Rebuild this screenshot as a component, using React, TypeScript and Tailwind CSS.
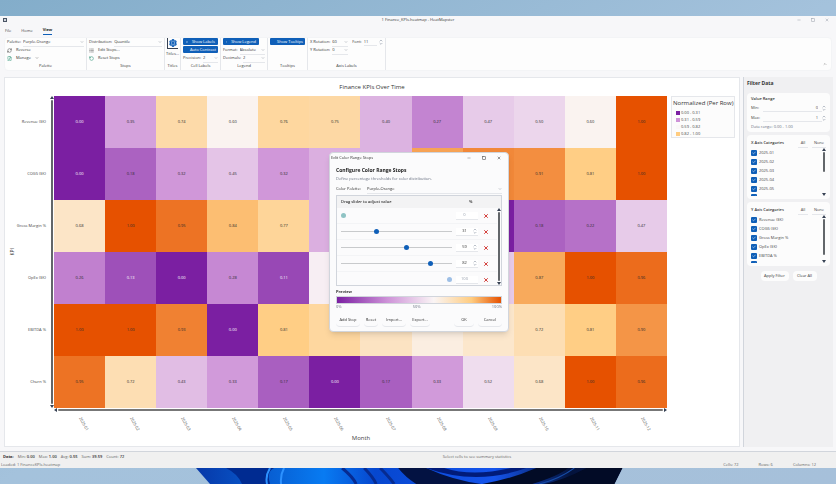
import { useState } from 'react';
import type { ReactNode } from 'react';
import {
  Captions,
  Check,
  ChevronDown,
  Contrast,
  FilePen,
  Hash,
  List,
  MessageSquare,
  Minus,
  RefreshCw,
  RotateCcw,
  Settings,
  Square,
  X,
} from 'lucide-react';
import clsx from 'clsx';

const months = Array.from({ length: 12 }, (_, i) => `2025-${String(i + 1).padStart(2, '0')}`);

const rows = [
  { name: 'Revenue ($K)', values: [0, 0.35, 0.74, 0.6, 0.76, 0.75, 0.4, 0.27, 0.47, 0.5, 0.6, 1] },
  { name: 'COGS ($K)', values: [0, 0.18, 0.32, 0.45, 0.32, 0.39, 0.4, 0.88, 0.92, 0.91, 0.81, 1] },
  { name: 'Gross Margin %', values: [0.68, 1, 0.95, 0.84, 0.77, 0.39, 0.35, 0.2, 0, 0.18, 0.22, 0.47] },
  { name: 'OpEx ($K)', values: [0.26, 0.13, 0, 0.28, 0.11, 0.57, 0.55, 0.5, 0.47, 0.87, 1, 0.96] },
  { name: 'EBITDA %', values: [1, 1, 0.93, 0, 0.81, 0.76, 0.69, 0.63, 0.67, 0.72, 0.81, 0.9] },
  { name: 'Churn %', values: [0.95, 0.72, 0.43, 0.33, 0.17, 0, 0.17, 0.33, 0.52, 0.68, 1, 0.96] },
];

const scale: [number, number[]][] = [
  [0, [123, 31, 162]],
  [0.31, [206, 147, 216]],
  [0.59, [250, 245, 245]],
  [0.82, [255, 204, 128]],
  [1, [230, 81, 0]],
];

function cellColor(v: number) {
  const i = Math.max(1, scale.findIndex(([stop]) => v <= stop));
  const [a, from] = scale[i - 1];
  const [b, to] = scale[i];
  const t = (v - a) / (b - a);
  return `rgb(${from.map((c, k) => Math.round(c + (to[k] - c) * t)).join(',')})`;
}

function Select({ label, value, className }: { label: string; value: string; className?: string }) {
  return (
    <label className="flex h-2 items-center gap-[2px]">
      <span className="shrink-0">{label}</span>
      <span className={clsx('flex items-center border-b border-gray-200', className)}>
        <select defaultValue={value} className="h-2 min-w-0 flex-1 appearance-none bg-transparent p-0 outline-none">
          <option>{value}</option>
        </select>
        <ChevronDown size={4} className="shrink-0 text-gray-500" />
      </span>
    </label>
  );
}

function Spinner() {
  return (
    <svg viewBox="0 0 6 8" className="h-[6px] w-1 shrink-0 stroke-gray-400" fill="none">
      <path d="M1 3 3 1l2 2M1 5.500l2 2 2-2" />
    </svg>
  );
}

function Group({ title, children, className }: { title: string; children: ReactNode; className?: string }) {
  return (
    <section className={clsx('flex shrink-0 flex-col border-r border-gray-200 px-[2px]', className)}>
      <div className="flex flex-1 flex-col">{children}</div>
      <h2 className="h-2 text-center">{title}</h2>
    </section>
  );
}

function Toggle({ icon, children }: { icon: ReactNode; children: ReactNode }) {
  return (
    <button className="mb-px flex h-[7px] w-full items-center gap-1 rounded-[1px] bg-[#0f5fb8] px-[3px] leading-[7px] text-white">
      {icon}
      <span className="flex-1 whitespace-nowrap">{children}</span>
    </button>
  );
}

function Ribbon() {
  return (
    <div className="mx-1 flex h-[34px] shrink-0 rounded-sm border border-gray-100 bg-[#fdfdfd] text-[4px] text-[#333] leading-2">
      <Group title="Palette" className="w-[82px]">
        <Select label="Palette:" value="Purple-Orange" className="flex-1" />
        <button className="flex h-2 items-center gap-1 text-left">
          <RefreshCw size={5} /> Reverse
        </button>
        <button className="flex h-2 items-center gap-1 text-left">
          <FilePen size={5} className="text-emerald-700" /> Manage <ChevronDown size={4} />
        </button>
      </Group>
      <Group title="Stops" className="w-[78px]">
        <Select label="Distribution:" value="Quantile" className="flex-1" />
        <button className="flex h-2 items-center gap-1 text-left">
          <List size={5} /> Edit Stops...
        </button>
        <button className="flex h-2 items-center gap-1 text-left">
          <RotateCcw size={5} className="text-emerald-700" /> Reset Stops
        </button>
      </Group>
      <Group title="Titles" className="w-4">
        <button className="flex flex-col items-center">
          <span className="mb-px border-b border-l border-gray-700 p-px">
            <Settings size={8} strokeWidth={4} className="text-[#0f5fb8]" />
          </span>
          Titles...
        </button>
      </Group>
      <Group title="Cell Labels" className="w-10">
        <Toggle icon={<Hash size={4} />}>Show Labels</Toggle>
        <Toggle icon={<Contrast size={4} />}>Auto Contrast</Toggle>
        <Select label="Precision:" value="2" className="flex-1" />
      </Group>
      <Group title="Legend" className="w-[47px]">
        <div className="w-9">
          <Toggle icon={<Captions size={4} />}>Show Legend</Toggle>
        </div>
        <Select label="Format:" value="Absolute" className="flex-1" />
        <Select label="Decimals:" value="2" className="flex-1" />
      </Group>
      <Group title="Tooltips" className="w-10">
        <Toggle icon={<MessageSquare size={4} />}>Show Tooltips</Toggle>
      </Group>
      <Group title="Axis Labels" className="w-[78px]">
        <div className="flex gap-1">
          <Select label="X Rotation:" value="60" className="w-4" />
          <label className="flex h-2 flex-1 items-center gap-[2px]">
            Font:
            <input defaultValue="11" className="h-2 w-full min-w-0 border-b border-gray-200 bg-transparent" />
            <Spinner />
          </label>
        </div>
        <Select label="Y Rotation:" value="0" className="w-4" />
      </Group>
      <button aria-label="Collapse ribbon" className="mt-auto ml-auto p-1">
        <ChevronDown size={4} className="rotate-180" />
      </button>
    </div>
  );
}

function VerticalScrollbar({ className, thumb = 'flex-1' }: { className?: string; thumb?: string }) {
  return (
    <div className={clsx('flex w-1 shrink-0 flex-col items-center text-gray-700', className)}>
      <svg viewBox="0 0 4 3" className="h-[3px] w-1 shrink-0 fill-current">
        <path d="M2 0 4 3H0z" />
      </svg>
      <div className={clsx('my-px w-[2px] rounded-full bg-[#62666a]', thumb)} />
      <svg viewBox="0 0 4 3" className="mt-auto h-[3px] w-1 shrink-0 fill-current">
        <path d="M0 0h4L2 3z" />
      </svg>
    </div>
  );
}

function Heatmap() {
  return (
    <main className="flex min-w-0 flex-1 flex-col border border-gray-200 bg-white text-[#444]">
      <h1 className="h-[18px] text-center text-[6px] leading-[18px] text-[#333]">Finance KPIs Over Time</h1>
      <div className="flex min-h-0 flex-1">
        <div className="flex w-4 shrink-0 items-center justify-center">
          <span className="-rotate-90 text-[5px]">KPI</span>
        </div>
        <div className="grid w-[25px] shrink-0 grid-cols-1 grid-rows-6 items-center text-[4px] whitespace-nowrap">
          {rows.map((row) => (
            <span key={row.name} className="flex justify-end">{row.name}</span>
          ))}
        </div>
        <VerticalScrollbar className="ml-1" />
        <div className="grid min-w-0 flex-1 grid-cols-12 grid-rows-6 text-[4px]">
          {rows.map((row) =>
            row.values.map((v, i) => (
              <div
                key={row.name + i}
                className={clsx('flex items-center justify-center', v < 0.15 ? 'text-white' : 'text-[#2b2b2b]')}
                style={{ backgroundColor: cellColor(v) }}
              >
                {v.toFixed(2)}
              </div>
            )),
          )}
        </div>
        <Legend />
      </div>
      <div className="mr-[72px] ml-[49px] flex h-1 items-center gap-px text-gray-700">
        <svg viewBox="0 0 3 4" className="h-1 w-[3px] fill-current">
          <path d="M3 0v4L0 2z" />
        </svg>
        <div className="h-[2px] flex-1 rounded-full bg-[#777]" />
        <svg viewBox="0 0 3 4" className="h-1 w-[3px] fill-current">
          <path d="M0 0v4l3-2z" />
        </svg>
      </div>
      <div className="mr-[72px] ml-[49px] grid h-6 grid-cols-12 items-center text-[4px]">
        {months.map((m) => (
          <span key={m} className="flex pl-2 justify-center">
            <span className="rotate-60">{m}</span>
          </span>
        ))}
      </div>
      <p className="h-[10px] pr-[22px] text-center text-[6px] leading-[5px]">Month</p>
    </main>
  );
}

function Legend() {
  const items = [
    { label: '0.00 - 0.31', swatch: 'bg-[#7b1fa2]' },
    { label: '0.31 - 0.59', swatch: 'bg-[#ce93d8]' },
    { label: '0.59 - 0.82', swatch: 'bg-[#faf8f8]' },
    { label: '0.82 - 1.00', swatch: 'bg-[#ffcc80]' },
  ];
  return (
    <aside className="mr-1 ml-1 h-[42px] w-16 shrink-0 border border-gray-200 bg-[#fcfcfc] px-px">
      <h2 className="text-[6px] leading-3 whitespace-nowrap text-[#333]">Normalized (Per Row)</h2>
      <ul>
        {items.map((item) => (
          <li key={item.label} className="flex items-center gap-px pl-[3px] text-[4px] leading-[7px]">
            <span className={clsx('size-1', item.swatch)} />
            {item.label}
          </li>
        ))}
      </ul>
    </aside>
  );
}

function FilterCheckbox({ label }: { label: string }) {
  return (
    <span className="grid size-[6px] shrink-0 place-items-center">
      <input
        type="checkbox"
        defaultChecked
        aria-label={label}
        className="col-start-1 row-start-1 size-[6px] appearance-none rounded-[1px] bg-[#0f5fb8]"
      />
      <Check size={4} strokeWidth={3} className="pointer-events-none col-start-1 row-start-1 text-white" />
    </span>
  );
}

interface CategoryCardProps {
  title: string;
  items: string[];
  next: string;
  thumb?: string;
}

function CategoryCard({ title, items, next, thumb }: CategoryCardProps) {
  return (
    <section className="mt-[3px] h-16 overflow-hidden rounded-sm bg-[#fcfcfc] px-1 pt-1">
      <div className="mb-px flex h-2 items-center justify-between leading-2">
        <h3 className="font-semibold text-[#333]">{title}</h3>
        <span className="flex gap-1">
          <button className="w-[10px] border-b border-gray-200">All</button>
          <button className="w-[14px] border-b border-gray-200">None</button>
        </span>
      </div>
      <div className="flex h-12">
        <div className="flex-1 overflow-hidden">
          {items.map((item) => (
            <label key={item} className="flex h-[9px] items-center gap-[2px]">
              <FilterCheckbox label={item} />
              {item}
            </label>
          ))}
          <div className="pt-px">
            <FilterCheckbox label={next} />
          </div>
        </div>
        <VerticalScrollbar thumb={thumb} />
      </div>
    </section>
  );
}

function FilterPanel() {
  return (
    <aside className="w-[90px] shrink-0 border-l border-gray-300 bg-[#f0f0f2] px-[3px] text-[4px] text-[#444]">
      <h2 className="pt-[2px] pb-[6px] text-[5px] leading-2 font-bold text-[#333]">Filter Data</h2>
      <section className="h-[39px] rounded-sm bg-[#fcfcfc] px-1 pt-[2px]">
        <h3 className="leading-2 font-semibold text-[#333]">Value Range</h3>
        {[
          { label: 'Min:', value: '0' },
          { label: 'Max:', value: '1' },
        ].map((field) => (
          <label key={field.label} className="flex h-[10px] items-center">
            <span className="w-3">{field.label}</span>
            <input
              defaultValue={field.value}
              className="h-2 min-w-0 flex-1 border-b border-gray-200 bg-transparent pr-1 text-right"
            />
            <Spinner />
          </label>
        ))}
        <p className="leading-2 text-gray-500">Data range: 0.00 - 1.00</p>
      </section>
      <CategoryCard title="X Axis Categories" items={months.slice(0, 5)} next={months[5]} thumb="h-5" />
      <CategoryCard
        title="Y Axis Categories"
        items={rows.slice(0, 5).map((r) => r.name)}
        next={rows[5].name}
        thumb="h-9"
      />
      <div className="mt-[5px] flex justify-center gap-1 leading-[10px] text-[#333]">
        <button className="w-7 rounded-sm bg-[#fcfcfc]">Apply Filter</button>
        <button className="w-6 rounded-sm bg-[#fcfcfc]">Clear All</button>
      </div>
    </aside>
  );
}

function StopsDialog() {
  const [stops, setStops] = useState([0, 31, 59, 82, 100]);
  const update = (index: number, value: number) => setStops(stops.map((s, i) => (i === index ? value : s)));

  return (
    <div className="fixed inset-0 flex items-center justify-center pl-[2px]">
      <div
        role="dialog"
        aria-label="Edit Color Range Stops"
        className="w-[180px] rounded-sm border border-gray-300 bg-[#fbfbfc] text-[4px] leading-2 text-[#333] shadow-md"
      >
        <header className="flex h-[10px] items-center px-px">
          <span className="flex-1">Edit Color Range Stops</span>
          <div className="flex gap-[11px] pr-[6px]">
            <button aria-label="Minimize"><Minus size={4} /></button>
            <button aria-label="Maximize"><Square size={4} strokeWidth={3} /></button>
            <button aria-label="Close"><X size={4} strokeWidth={3} /></button>
          </div>
        </header>
        <div className="px-[6px] pt-[3px]">
          <h2 className="mb-px text-[5px] font-bold text-[#222]">Configure Color Range Stops</h2>
          <p className="text-gray-500">Define percentage thresholds for color distribution.</p>
          <div className="my-[2px]">
            <Select label="Color Palette:" value="Purple-Orange" className="ml-1 flex-1" />
          </div>
          <div className="h-[91px] border border-gray-300">
            <div className="flex h-3 items-center bg-[#f3f3f4] px-1 font-semibold">
              <span className="w-[128px]">Drag slider to adjust value</span>
              <span>%</span>
            </div>
            <div className="flex h-[77px]">
              <ul className="flex-1 overflow-hidden">
                {stops.map((stop, i) => {
                  const locked = i === 0 || i === stops.length - 1;
                  return (
                    <li key={i} className="flex h-4 items-center border-b border-gray-100 px-1">
                      <input
                        type="range"
                        aria-label={`Stop ${i + 1}`}
                        value={stop}
                        disabled={locked}
                        onChange={(e) => update(i, Number(e.target.value))}
                        className={clsx(
                          'h-[5px] w-[111px] appearance-none bg-transparent',
                          '[&::-webkit-slider-thumb]:size-[5px] [&::-webkit-slider-thumb]:appearance-none [&::-webkit-slider-thumb]:rounded-full',
                          !locked &&
                            '[&::-webkit-slider-runnable-track]:bg-[linear-gradient(#c8cacc,#c8cacc)] [&::-webkit-slider-runnable-track]:bg-[length:100%_1px] [&::-webkit-slider-runnable-track]:bg-center [&::-webkit-slider-runnable-track]:bg-no-repeat [&::-webkit-slider-thumb]:bg-[#0f5fb8]',
                          locked && i > 0 && '[&::-webkit-slider-thumb]:bg-[#9dbfe6]',
                          i === 0 && '[&::-webkit-slider-thumb]:bg-[#8fc3c4]',
                        )}
                      />
                      <span className="ml-1 flex h-2 w-[22px] items-center border-b border-gray-200 bg-white">
                        <input
                          aria-label={`Stop ${i + 1} percent`}
                          value={stop}
                          disabled={locked}
                          onChange={(e) => update(i, Number(e.target.value))}
                          className={clsx('h-2 w-[17px] bg-transparent text-center', locked && 'text-gray-400')}
                        />
                        {!locked && <Spinner />}
                      </span>
                      <button aria-label={`Remove stop ${i + 1}`} className="ml-[5px]">
                        <X size={6} strokeWidth={4} className="text-[#d4423e]" />
                      </button>
                    </li>
                  );
                })}
              </ul>
              <VerticalScrollbar />
            </div>
          </div>
          <h3 className="mt-[2px] font-bold">Preview</h3>
          <div className="h-2 border border-gray-300 bg-[linear-gradient(to_right,#7b1fa2,#ce93d8_31%,#faf5f5_59%,#ffcc80_82%,#e65100)]" />
          <div className="flex justify-between leading-[6px] text-gray-500">
            <span>0%</span>
            <span>50%</span>
            <span>100%</span>
          </div>
          <div className="flex gap-1 pt-1 pb-1 leading-3">
            <button className="w-6 rounded-sm border-b border-gray-200">Add Stop</button>
            <button className="w-[14px] rounded-sm border-b border-gray-200">Reset</button>
            <button className="w-6 rounded-sm border-b border-gray-200">Import...</button>
            <button className="w-5 rounded-sm border-b border-gray-200">Export...</button>
            <button className="ml-auto w-5 rounded-sm border-b border-gray-200">OK</button>
            <button className="w-6 rounded-sm border-b border-gray-200">Cancel</button>
          </div>
        </div>
      </div>
    </div>
  );
}

function StatusBar() {
  const stats = [
    ['Min:', '0.00'],
    ['Max:', '1.00'],
    ['Avg:', '0.55'],
    ['Sum:', '39.59'],
    ['Count:', '72'],
  ];
  return (
    <footer className="shrink-0 border-t border-gray-300 bg-[#f0f0f0] text-[4px] text-[#666]">
      <div className="grid h-[10px] grid-cols-[1fr_auto_1fr] items-center px-[3px]">
        <div className="flex gap-1">
          <b className="text-[#333]">Data:</b>
          {stats.map(([name, value]) => (
            <span key={name}>
              {name} <b className="font-semibold text-[#333]">{value}</b>
            </span>
          ))}
        </div>
        <span className="ml-[118px]">Select cells to see summary statistics</span>
      </div>
      <div className="flex h-[6px] items-center gap-5 pr-5 pl-px leading-[6px]">
        <span className="flex-1">Loaded: 1 FinanceKPIs.heatmap</span>
        <span>Cells: 72</span>
        <span>Rows: 6</span>
        <span>Columns: 12</span>
      </div>
    </footer>
  );
}

// Petals of the desktop wallpaper that show under the window
function Wallpaper() {
  return (
    <svg viewBox="0 0 426 16" preserveAspectRatio="none" className="absolute bottom-0 left-[23.500%] h-4 w-[51%]">
      <defs>
        <linearGradient id="bloom">
          <stop offset="0" stopColor="#0738a8" />
          <stop offset="0.3" stopColor="#087bf2" />
          <stop offset="0.42" stopColor="#0647cf" />
          <stop offset="0.7" stopColor="#1554ec" />
          <stop offset="0.88" stopColor="#04133c" />
          <stop offset="1" stopColor="#061c58" />
        </linearGradient>
      </defs>
      <path d="M0 0h426l-8 16H14z" fill="url(#bloom)" />
      <path d="M30 0q12 6 16 16h28Q70 4 78 0z" fill="#002b91" />
      <path d="M74 0q-5 8-3 16m17-16q-4 7-3 16" fill="none" stroke="#2d92ff" strokeWidth="2" />
      <path d="M146 0q11 9 14 16m8-16q9 9 12 16m4-16q9 9 14 16" fill="none" stroke="#062b91" strokeWidth="3" />
      <path d="M202 0h28q26 12 55 16h-65Q209 9 202 0z" fill="#031242" />
      <path d="M230 0q50 18 100 0h-15q-39 9-67 0z" fill="#011b79" />
      <path d="M340 0q-25 11-54 16h50Q362 8 372 0zM390 0q-22 12-42 16h70l8-16z" fill="#020b26" />
      <path d="M378 0q-15 11-35 16" fill="none" stroke="#174da9" />
    </svg>
  );
}

export default function App() {
  return (
    <div className="relative flex h-screen flex-col bg-linear-to-br from-[#83adca] via-[#a4c2dc] to-[#a6c0da] py-4 font-['Open_Sans',sans-serif] text-[4px]">
      <Wallpaper />
      <div className="flex min-h-0 flex-1 flex-col bg-[#f7f7f9]">
        <header className="grid h-2 shrink-0 grid-cols-[1fr_auto_1fr] items-center px-[3px] leading-2 text-[#333]">
          <span className="size-1 border border-gray-600 bg-gray-300" />
          <span>1 Finance_KPIs.heatmap - HeatMapster</span>
          <div className="flex justify-end gap-[10px] pr-1 text-gray-500">
            <button aria-label="Minimize"><Minus size={4} /></button>
            <button aria-label="Maximize"><Square size={4} /></button>
            <button aria-label="Close"><X size={4} /></button>
          </div>
        </header>
        <nav className="flex h-[13px] shrink-0 items-center gap-[10px] px-[5px] leading-2 text-[#444]">
          <a href="#file">File</a>
          <a href="#home">Home</a>
          <a href="#view" className="border-b border-[#0f5fb8] font-bold text-[#222]">View</a>
        </nav>
        <Ribbon />
        <div className="flex min-h-0 flex-1 gap-[3px] pt-[6px] pr-[3px] pb-1 pl-1">
          <Heatmap />
          <FilterPanel />
        </div>
        <StatusBar />
      </div>
      <StopsDialog />
    </div>
  );
}
